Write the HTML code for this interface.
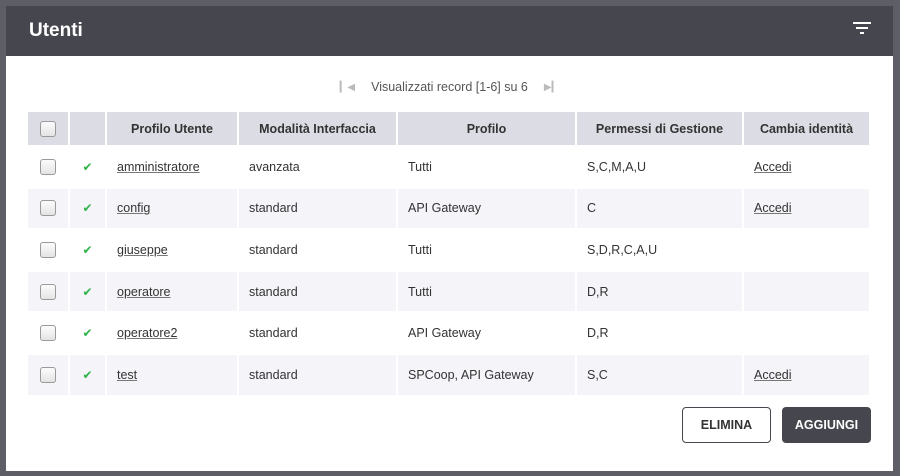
<!DOCTYPE html>
<html><head><style>
*{margin:0;padding:0;box-sizing:border-box}
body{width:900px;height:476px;background:#5e5e66;font-family:"Liberation Sans",Arial,sans-serif;position:relative;overflow:hidden}
.card{position:absolute;left:6px;top:6px;width:887px;height:465px;background:#fff}
.hdr{height:50px;background:#46464e;color:#fff;font-size:19px;font-weight:bold;padding:14px 0 0 23px}
.pager{position:absolute;top:74px;left:0;width:887px;text-align:center;font-size:12.5px;color:#555}
.pager span.i{color:#bbb;font-size:10px;margin:0 16px;vertical-align:1px}
table{position:absolute;left:20px;top:104px;border-collapse:collapse;font-size:12.5px;color:#333}
td,th{border:2px solid #fff;padding:0 10px;text-align:left;white-space:nowrap}
th{background:#dcdce4;height:35px;text-align:center;font-size:12.5px;color:#333}
td{height:41.6px}
tr.a td{background:#fff}
tr.b td{background:#f4f4f9}
.cb{display:inline-block;width:16px;height:16px;border:1px solid #999;border-radius:3px;background:linear-gradient(#fcfcfc,#e4e4e4);vertical-align:middle}
.ck{color:#2db34a;font-size:12px;text-align:center}
u{text-decoration:underline;text-decoration-color:#777}
.btn{position:absolute;top:401px;height:36px;width:89px;border-radius:4px;font-size:12.5px;font-weight:bold;text-align:center;line-height:34px}
</style></head><body>
<div class="card">
<div class="hdr">Utenti</div>
<svg style="position:absolute;left:847px;top:16px" width="18" height="14"><rect x="0" y="0" width="18" height="2" fill="#fff"/><rect x="3" y="5" width="12" height="2" fill="#fff"/><rect x="7" y="10" width="4" height="2" fill="#fff"/></svg>
<div class="pager"><span class="i">&#9614;&#9664;</span>Visualizzati record [1-6] su 6<span class="i">&#9654;&#9614;</span></div>
<table>
<tr><th style="width:42px"><span class="cb"></span></th><th style="width:37px"></th><th style="width:132px">Profilo Utente</th><th style="width:159px">Modalità Interfaccia</th><th style="width:179px">Profilo</th><th style="width:167px">Permessi di Gestione</th><th style="width:127px">Cambia identità</th></tr>
<tr class="a"><td style="text-align:center"><span class="cb"></span></td><td class="ck">&#10004;</td><td><u>amministratore</u></td><td>avanzata</td><td>Tutti</td><td>S,C,M,A,U</td><td><u>Accedi</u></td></tr>
<tr class="b"><td style="text-align:center"><span class="cb"></span></td><td class="ck">&#10004;</td><td><u>config</u></td><td>standard</td><td>API Gateway</td><td>C</td><td><u>Accedi</u></td></tr>
<tr class="a"><td style="text-align:center"><span class="cb"></span></td><td class="ck">&#10004;</td><td><u>giuseppe</u></td><td>standard</td><td>Tutti</td><td>S,D,R,C,A,U</td><td></td></tr>
<tr class="b"><td style="text-align:center"><span class="cb"></span></td><td class="ck">&#10004;</td><td><u>operatore</u></td><td>standard</td><td>Tutti</td><td>D,R</td><td></td></tr>
<tr class="a"><td style="text-align:center"><span class="cb"></span></td><td class="ck">&#10004;</td><td><u>operatore2</u></td><td>standard</td><td>API Gateway</td><td>D,R</td><td></td></tr>
<tr class="b"><td style="text-align:center"><span class="cb"></span></td><td class="ck">&#10004;</td><td><u>test</u></td><td>standard</td><td>SPCoop, API Gateway</td><td>S,C</td><td><u>Accedi</u></td></tr>
</table>
<div class="btn" style="left:676px;border:1px solid #46464e;color:#333;background:#fff">ELIMINA</div>
<div class="btn" style="left:776px;background:#46464e;color:#fff;line-height:36px">AGGIUNGI</div>
</div>
</body></html>
